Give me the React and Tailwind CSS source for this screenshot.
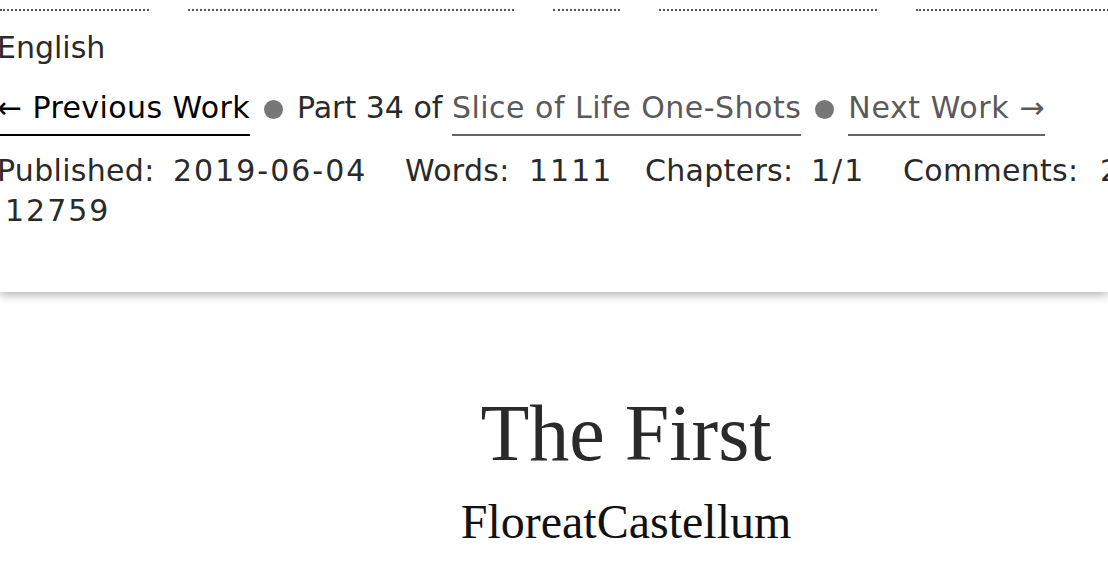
import React from "react";

const SANS = { fontFamily: '"DejaVu Sans", "Lucida Grande", sans-serif' };

const TAGS = [
  { text: "Tragedy", w: "w-[149px]" },
  { text: "Mystery Writing Day", w: "w-[326px]" },
  { text: "Fluff", w: "w-[67px]" },
  { text: "Short Oneshot", w: "w-[218px]" },
  { text: "Drabble Collection", w: "w-[260px]" },
];

const STATS = [
  { label: "Published:", value: "2019-06-04", lw: "w-[176px]", vw: "w-[232px]" },
  { label: "Words:", value: "1111", lw: "w-[124px]", vw: "w-[116px]" },
  { label: "Chapters:", value: "1/1", lw: "w-[166px]", vw: "w-[92px]" },
  { label: "Comments:", value: "25", lw: "w-[197px]", vw: "w-[80px]" },
  { label: "Kudos:", value: "236", lw: "w-[124px]", vw: "w-[100px]" },
];

function Bullet() {
  return <span className="inline-block w-[19px] h-[19px] rounded-full bg-[#777] mx-[14px] align-[-1px]" />;
}

export default function App() {
  return (
    <div className="w-[1108px] h-[568px] overflow-hidden bg-white text-[#2a2a2a]" style={SANS}>
      {/* work meta panel */}
      <div className="relative z-10 bg-white h-[292px] shadow-[0_3px_9px_rgba(0,0,0,0.3)]">
        <div className="h-[11px] overflow-hidden">
          <div className="flex gap-[39px] -mt-[37px] text-[30px] leading-[42px] whitespace-nowrap">
            {TAGS.map((t) => (
              <span
                key={t.text}
                className={`${t.w} shrink-0 overflow-hidden pb-[4px] border-b-2 border-dotted border-[#555]`}
              >
                {t.text}
              </span>
            ))}
          </div>
        </div>

        <div className="-ml-[3px] w-[1400px] text-[30px] leading-[40px]">
          <p className="mt-[17px]">English</p>

          <p className="mt-[18px] whitespace-nowrap">
            <a className="inline-block pb-[4px] leading-[44px] tracking-[0.4px] border-b-2 border-black text-black">
              ← Previous Work
            </a>
            <Bullet />
            <span>Part 34 of </span>
            <a className="inline-block pb-[4px] leading-[44px] tracking-[0.5px] border-b-2 border-[#666] text-[#5a5a5a]">
              Slice of Life One-Shots
            </a>
            <Bullet />
            <a className="inline-block pb-[4px] leading-[44px] tracking-[0.6px] border-b-2 border-[#666] text-[#5a5a5a]">
              Next Work →
            </a>
          </p>

          <dl className="mt-[15px] flex whitespace-nowrap">
            {STATS.map((s) => (
              <React.Fragment key={s.label}>
                <dt className={`${s.lw} shrink-0 tracking-[0.3px]`}>{s.label}</dt>
                <dd className={`${s.vw} shrink-0 tracking-[2px]`}>{s.value}</dd>
              </React.Fragment>
            ))}
            <dt className="shrink-0">Hits:</dt>
          </dl>
          <dl className="pl-[8px] flex">
            <dd className="tracking-[2px]">12759</dd>
          </dl>
        </div>
      </div>

      {/* preface */}
      <div className="pl-[144px] text-center" style={{ fontFamily: '"Liberation Serif", Georgia, serif' }}>
        <h2 className="mt-[96px] text-[80px] leading-[90px] text-[#2a2a2a]">The First</h2>
        <h3 className="mt-[14px] text-[48px] leading-[60px] text-[#111]">FloreatCastellum</h3>
      </div>
    </div>
  );
}
